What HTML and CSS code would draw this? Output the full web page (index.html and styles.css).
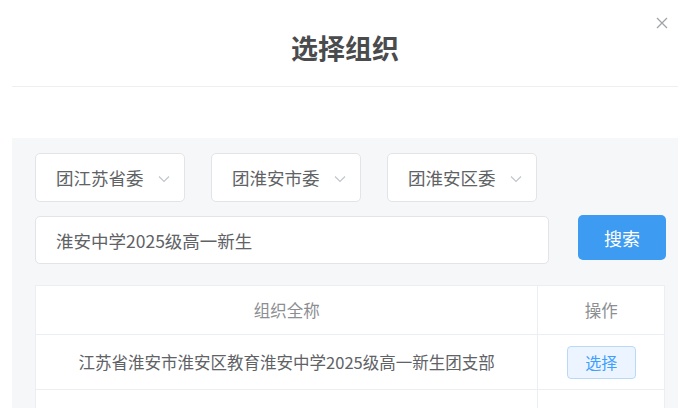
FILE: index.html
```html
<!DOCTYPE html>
<html>
<head>
    <title>选择组织</title>
    <link rel="stylesheet" href="styles.css">
</head>
<body>
    <div class="dialog">
        <div class="dialog-header">
            <h2 class="dialog-title">选择组织</h2>
            <span class="close-btn">
                <svg width="12" height="12" viewBox="0 0 12 12"><path d="M1 1L11 11M11 1L1 11" stroke="#a0a3a8" stroke-width="1.3" fill="none"/></svg>
            </span>
        </div>

        <div class="panel">
            <div class="select-row">
                <div class="select">团江苏省委 <span class="arrow"><svg width="12" height="8" viewBox="0 0 12 8"><path d="M1 1.5L6 6.5L11 1.5" stroke="#c0c4cc" stroke-width="1.1" fill="none"/></svg></span></div>
                <div class="select">团淮安市委 <span class="arrow"><svg width="12" height="8" viewBox="0 0 12 8"><path d="M1 1.5L6 6.5L11 1.5" stroke="#c0c4cc" stroke-width="1.1" fill="none"/></svg></span></div>
                <div class="select">团淮安区委 <span class="arrow"><svg width="12" height="8" viewBox="0 0 12 8"><path d="M1 1.5L6 6.5L11 1.5" stroke="#c0c4cc" stroke-width="1.1" fill="none"/></svg></span></div>
            </div>

            <div class="search-row">
                <div class="search-input">淮安中学2025级高一新生</div>
                <button class="search-btn">搜索</button>
            </div>

            <table class="org-table">
                <thead>
                    <tr>
                        <th class="col-name">组织全称</th>
                        <th class="col-op">操作</th>
                    </tr>
                </thead>
                <tbody>
                    <tr>
                        <td>江苏省淮安市淮安区教育淮安中学2025级高一新生团支部</td>
                        <td><button class="pick-btn">选择</button></td>
                    </tr>
                    <tr class="empty-row">
                        <td></td>
                        <td></td>
                    </tr>
                </tbody>
            </table>
        </div>
    </div>
</body>
</html>
```

FILE: styles.css
```css
body {
    margin: 0;
    background: #fff;
    font-family: "Noto Sans CJK SC", "Noto Sans", sans-serif;
    color: #606266;
    overflow: hidden;
}
.dialog {
    width: 690px;
    height: 408px;
    overflow: hidden;
}
.dialog-header {
    position: relative;
    margin: 0 12px;
    height: 86px;
    border-bottom: 1px solid #eeeff1;
    display: flex;
    align-items: center;
    justify-content: center;
}
.dialog-title {
    margin: 0;
    padding-top: 8px;
    font-size: 27px;
    font-weight: bold;
    color: #4a4b4d;
}
.close-btn {
    position: absolute;
    top: 17px;
    right: 10px;
    line-height: 0;
}
.panel {
    margin: 51px 12px 0;
    padding: 15px 12px 0 23px;
    background: #f6f7f9;
    height: 300px;
}
.select-row {
    display: flex;
    gap: 26px;
}
.select {
    box-sizing: border-box;
    width: 150px;
    height: 49px;
    padding: 0 14px 0 20px;
    background: #fff;
    border: 1px solid #e2e4e8;
    border-radius: 5px;
    display: flex;
    align-items: center;
    justify-content: space-between;
    font-size: 17.5px;
    color: #606266;
}
.arrow {
    line-height: 0;
    margin-top: 2px;
}
.search-row {
    display: flex;
    align-items: flex-start;
    gap: 29px;
    margin-top: 14px;
}
.search-input {
    box-sizing: border-box;
    width: 514px;
    height: 48px;
    padding: 0 20px;
    background: #fff;
    border: 1px solid #e2e4e8;
    border-radius: 5px;
    display: flex;
    align-items: center;
    font-size: 17.5px;
    color: #606266;
}
.search-btn {
    width: 88px;
    height: 45px;
    margin-top: -1px;
    background: #3d9bf2;
    border: none;
    border-radius: 5px;
    color: #fff;
    font-family: inherit;
    font-size: 18px;
}
.org-table {
    margin-top: 21px;
    width: 630px;
    border-collapse: collapse;
    background: #fff;
    font-size: 16.5px;
}
.org-table th,
.org-table td {
    border: 1px solid #ebeef2;
    text-align: center;
    padding: 0;
}
.org-table th {
    height: 48px;
    font-weight: normal;
    color: #8c8e92;
}
.org-table td {
    height: 54px;
    color: #606266;
}
.col-name { width: 504px; }
.col-op { width: 126px; }
.org-table .empty-row td {
    height: 60px;
}
.pick-btn {
    width: 69px;
    height: 33px;
    background: #ecf5ff;
    border: 1px solid #b9d9f7;
    border-radius: 4px;
    color: #409eff;
    font-family: inherit;
    font-size: 16px;
}
```
